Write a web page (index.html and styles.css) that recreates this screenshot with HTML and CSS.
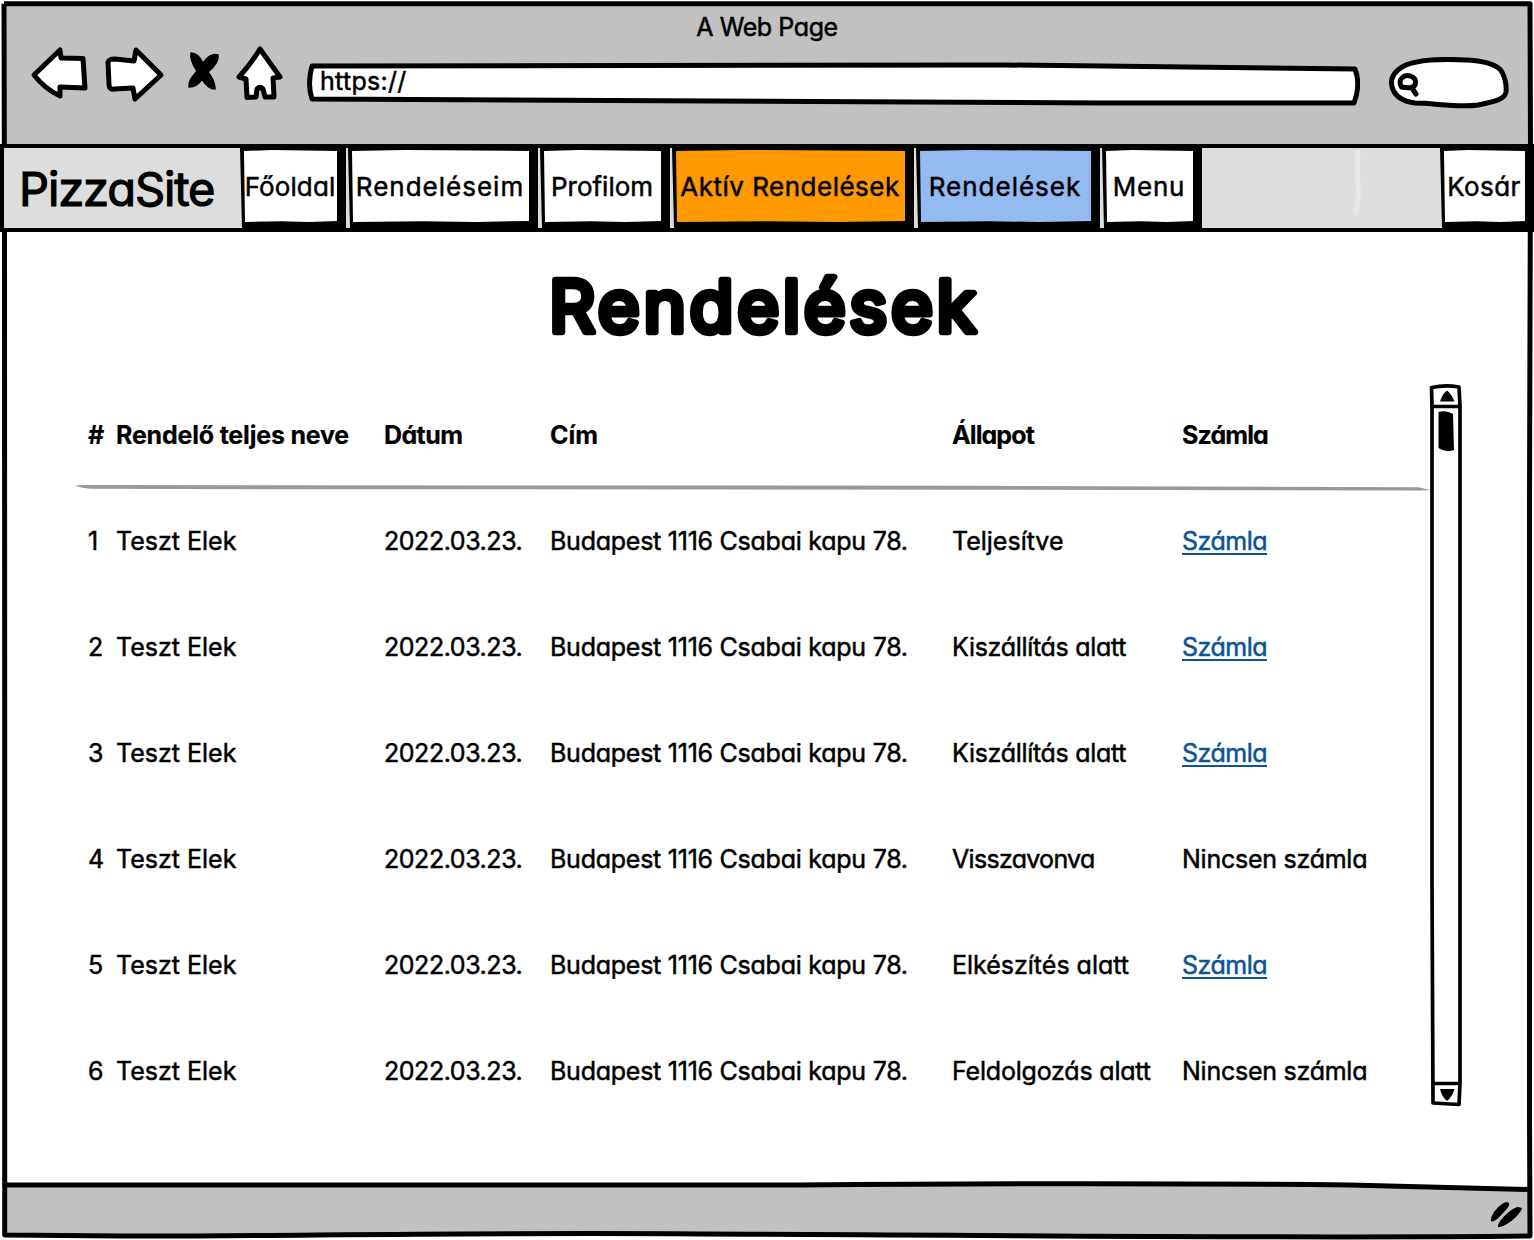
FILE: index.html
```html
<!DOCTYPE html>
<html lang="hu">
<head>
<meta charset="utf-8">
<title>PizzaSite – Rendelések</title>
<link rel="stylesheet" href="styles.css">
</head>
<body>
<div class="window">
  <svg class="frame" viewBox="0 0 1534 1240" aria-hidden="true">
    <path class="chrome" d="M4 4H1530V146H4Z"/>
    <path class="chrome" d="M5 1185C300 1187 900 1182 1300 1184L1530 1189V1236L5 1235Z"/>
    <path class="line" d="M4 3.7H1530L1530.500 147L1529.500 500V1120L1530 1236C1300 1239 1000 1235 700 1234C450 1232 250 1237 120 1236L4.700 1235V720L4.500 232L4 3.700"/>
    <path class="line" d="M4 1185C200 1187 500 1186 800 1185C1050 1183 1250 1184 1350 1185L1530 1189.500"/>
    <path class="grip" d="M1491 1221C1490 1215 1500 1203 1507 1202C1511 1203 1509 1207 1504 1212C1499 1218 1493 1223 1491 1221ZM1498 1227C1497 1222 1511 1208 1518 1207L1522 1208C1520 1216 1504 1228 1498 1227Z"/>
  </svg>

  <header class="browser">
    <div class="browser-title">A Web Page</div>
    <div class="toolbar">
      <svg class="tools" viewBox="0 0 260 60" aria-hidden="true">
        <path class="outline" d="M5 30L31 5L32 13L54 13.500L56 43L31 42V51Q16 44 5 30Z"/>
        <path class="outline" d="M79 17Q80 14 86 14L105 16L107 5L132 30L106 54L104 43L85 44Q80 45 80 39Z"/>
        <path class="solid" d="M162 8C168 8 172 14 174 18C178 12 184 8 189 10C190 16 185 22 179 27C183 32 186 38 186 44C180 44 176 39 173 34C170 39 166 42 160 42C159 36 164 31 168 26C164 20 161 14 162 8Z"/>
        <path class="outline" d="M231 4L251 32L244 33L245 52H236L234 44Q231 41 228 44L227 52L218 52.500L217 34L210 32Q222 19 231 4Z"/>
      </svg>
      <div class="address">
        <svg class="shape" viewBox="0 0 1054 44" preserveAspectRatio="none" aria-hidden="true">
          <path class="outline" d="M6 4Q400 4 700 3L1049 7Q1055 22 1048 41H800L6 37Q1 22 6 4Z"/>
        </svg>
        <span class="url">https://</span>
      </div>
      <svg class="search" viewBox="0 0 122 52" aria-hidden="true">
        <path class="outline" d="M27 46C2 43 -2 22 10 13C22 1 58 2 79 3C96 4 110 8 114 15Q119 25 118 35C117 43 104 45 90 48C70 51 46 46 27 46Z"/>
        <path class="glass" d="M15 20C19 17 28 19 27.500 26C27 32 19 31 13.500 30C11 26 12 22 15 20ZM24 31L28 37"/>
      </svg>
    </div>
  </header>

  <nav class="navbar">
    <div class="brand">PizzaSite</div>
    <a class="tab home"><span class="face">Főoldal</span></a>
    <a class="tab mine"><span class="face">Rendeléseim</span></a>
    <a class="tab profile"><span class="face">Profilom</span></a>
    <a class="tab active-orders"><span class="face">Aktív Rendelések</span></a>
    <a class="tab orders"><span class="face">Rendelések</span></a>
    <a class="tab menu"><span class="face">Menu</span></a>
    <svg class="mark" viewBox="0 0 10 70" aria-hidden="true"><path d="M5 4Q4 18 5 35Q6 50 3 65"/></svg>
    <a class="tab cart"><span class="face">Kosár</span></a>
  </nav>

  <main class="content">
    <h1 class="heading">
      <svg viewBox="0 0 460 110"><text x="13" y="80" textLength="427">Rendelések</text></svg>
    </h1>
    <div class="list">
      <div class="table">
        <div class="row head"><span>#</span><span class="t-name">Rendelő teljes neve</span><span class="t-tight">Dátum</span><span>Cím</span><span class="t-state">Állapot</span><span class="t-state">Számla</span></div>
        <svg class="rule" viewBox="0 0 1356 8" preserveAspectRatio="none" aria-hidden="true"><path d="M0 1.200Q6 .8 20 1L900 1.800L1343 3.200L1356 6L1343 6.500L900 5.700L200 5.200L16 4.700Q5 4 0 1.200Z"/></svg>
        <div class="row"><span>1</span><span>Teszt Elek</span><span class="date">2022.03.23.</span><span class="address-cell">Budapest 1116 Csabai kapu 78.</span><span>Teljesítve</span><span><a class="link">Számla</a></span></div>
        <div class="row"><span>2</span><span>Teszt Elek</span><span class="date">2022.03.23.</span><span class="address-cell">Budapest 1116 Csabai kapu 78.</span><span class="shipping">Kiszállítás alatt</span><span><a class="link">Számla</a></span></div>
        <div class="row"><span>3</span><span>Teszt Elek</span><span class="date">2022.03.23.</span><span class="address-cell">Budapest 1116 Csabai kapu 78.</span><span class="shipping">Kiszállítás alatt</span><span><a class="link">Számla</a></span></div>
        <div class="row"><span>4</span><span>Teszt Elek</span><span class="date">2022.03.23.</span><span class="address-cell">Budapest 1116 Csabai kapu 78.</span><span class="revoked">Visszavonva</span><span class="no-bill">Nincsen számla</span></div>
        <div class="row"><span>5</span><span>Teszt Elek</span><span class="date">2022.03.23.</span><span class="address-cell">Budapest 1116 Csabai kapu 78.</span><span>Elkészítés alatt</span><span><a class="link">Számla</a></span></div>
        <div class="row"><span>6</span><span>Teszt Elek</span><span class="date">2022.03.23.</span><span class="address-cell">Budapest 1116 Csabai kapu 78.</span><span class="t-name">Feldolgozás alatt</span><span class="no-bill">Nincsen számla</span></div>
      </div>
      <svg class="scrollbar" viewBox="0 0 34 724" aria-hidden="true">
        <path class="bar" d="M3 4.500Q16 1.500 30 4L31 23V300L31 700L30 721.500L4 720L3 500V23L2.500 4.500ZM3 23.500H31M4 700.500H31"/>
        <path class="solid" d="M11 18.500Q14 10 18 7.500Q22 10 25.500 18.500Z"/>
        <path class="solid" d="M9.500 29Q18 27 24 31L25 67Q17 70 9.500 65Z"/>
        <path class="solid" d="M11 706H25.500Q23 714 18 718Q13 714 11 706Z"/>
      </svg>
    </div>
  </main>
</div>
</body>
</html>
```

FILE: styles.css
```css
* { box-sizing: border-box; }

body {
  margin: 0;
  background: #fff;
  color: #000;
  font-family: Inter, "Open Sans", sans-serif;
  font-feature-settings: "cv11";
  font-size: 25px;
  line-height: 30px;
  -webkit-text-stroke: 0.5px currentColor;
}

.window {
  position: relative;
  width: 1534px;
  height: 1240px;
  overflow: hidden;
}

/* hand-drawn window border lies behind the whole page */
.frame {
  position: absolute;
  inset: 0;
  width: 100%;
  height: 100%;
}

.chrome { fill: #c1c1c1; }
.line { fill: none; stroke: #000; stroke-width: 5; stroke-linejoin: round; }
.solid, .grip { fill: #000; }
.tools .solid { stroke: #000; stroke-width: 1.5; stroke-linejoin: round; }
.outline { fill: #fff; stroke: #000; stroke-width: 5; stroke-linejoin: round; }

.browser, .navbar, .content { position: relative; }

.browser { height: 144px; padding-top: 12px; }

.browser-title {
  text-align: center;
  letter-spacing: -0.4px;
}

.toolbar {
  display: flex;
  align-items: flex-start;
  padding-left: 29px;
}

.tools { width: 260px; height: 60px; margin-top: 3px; }

.address {
  display: grid;
  width: 1054px;
  height: 44px;
  margin: 20px 0 0 17px;
}

.address > * { grid-area: 1 / 1; }
.shape { width: 1054px; height: 44px; }
.url { padding: 4px 0 0 14px; letter-spacing: 0.3px; z-index: 1; }

.search { width: 122px; height: 52px; margin: 15px 0 0 28px; }
.glass { fill: none; stroke: #000; stroke-width: 5; stroke-linecap: round; }

.navbar {
  display: flex;
  height: 88px;
  padding-left: 4px;
  border: solid #000;
  border-width: 4px 0;
  border-left: 0;
  background: linear-gradient(90deg, #000 4px, #ddd 4px);
  font-size: 26px;
}

.brand {
  width: 236px;
  padding: 11px 0 0 15px;
  font-size: 47px;
  line-height: 60px;
  letter-spacing: -1.1px;
  -webkit-text-stroke-width: 1.2px;
}

.tab {
  display: flex;
  height: 80px;
  margin-right: 2px;
  padding: 2px 9px 6px 4px;
  background: #000;
  clip-path: polygon(0 0, 100% 0, 100% 100%, 2px 100%);
}

.face {
  flex: 1;
  display: flex;
  align-items: center;
  justify-content: center;
  white-space: nowrap;
  background: #fff;
  padding: 1px 1px 0 0;
  clip-path: polygon(0 1px, 30% 0, 100% 1px, 100% 98.500%, 70% 100%, 40% 98.800%, 1px 100%);
}

.home { width: 106px; letter-spacing: 0.1px; }
.mine { width: 190px; letter-spacing: 1px; }
.profile { width: 130px; }
.active-orders { width: 242px; letter-spacing: 0.5px; }
.orders { width: 184px; letter-spacing: 1px; }
.menu { width: 100px; letter-spacing: 0.8px; }
.cart { width: 94px; margin: 0; letter-spacing: 0.4px; }
.active-orders .face { background: #ff9900; }
.orders .face { background: #94baf2; }

.mark { width: 10px; height: 70px; margin: 0 77px 0 auto; }
.mark path { fill: none; stroke: #e6e6e6; stroke-width: 5; stroke-linecap: round; }

.content { height: 950px; }

.heading { margin: 0 0 0 536px; height: 150px; padding-top: 20px; font-size: 72px; }
.heading svg { display: block; width: 460px; height: 110px; }
.heading text {
  font-weight: 400;
  stroke: #000;
  stroke-width: 6.5px;
  stroke-linejoin: round;
  -webkit-text-stroke: 6.5px #000;
}

.list { display: flex; padding-left: 75px; }
.table { width: 1354px; }

.row {
  display: grid;
  grid-template-columns: 28px 268px 166px 402px 230px 1fr;
  align-items: center;
  height: 106px;
  padding-left: 13px;
  white-space: nowrap;
}

.head { font-weight: 700; -webkit-text-stroke-width: 0.2px; }
.head + .rule { display: block; width: 1356px; height: 8px; margin: -4px 0; }
.rule path { fill: #999; }

.t-name { letter-spacing: -0.2px; }
.t-tight { letter-spacing: -0.6px; }
.t-state { letter-spacing: -0.9px; }
.date { letter-spacing: -0.45px; }
.address-cell { letter-spacing: -0.25px; }
.shipping { letter-spacing: -0.3px; }
.revoked { letter-spacing: -0.7px; }
.no-bill { letter-spacing: -0.25px; }

.link {
  display: inline-block;
  height: 29px;
  color: #0b5394;
  border-bottom: 2px solid #0b5394;
  letter-spacing: -0.5px;
}

.scrollbar { width: 34px; height: 724px; margin-top: 1px; }
.bar { fill: #fff; stroke: #000; stroke-width: 3.7; stroke-linejoin: round; }
```
